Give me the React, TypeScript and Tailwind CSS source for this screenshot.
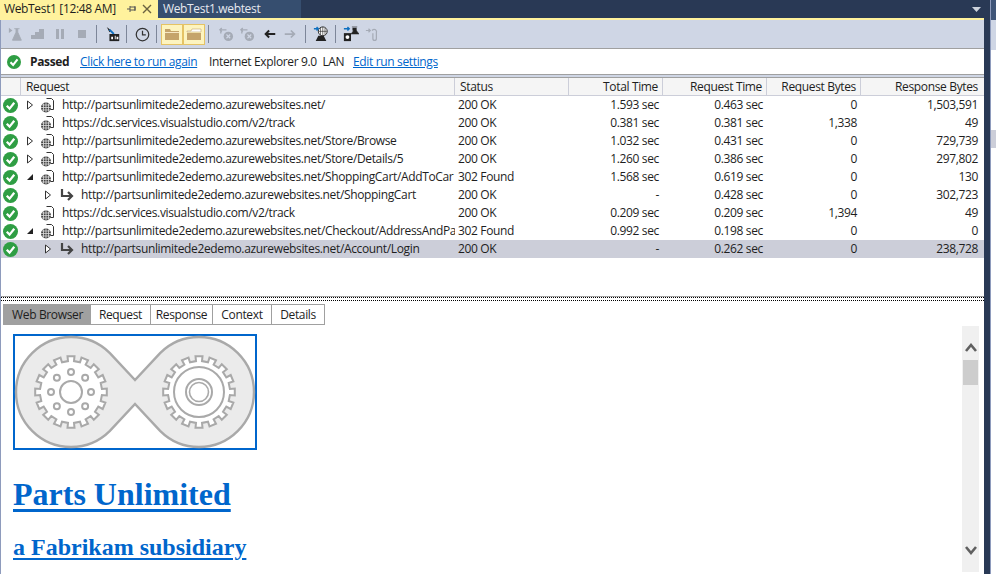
const rows = [
  { indent: 0, arrow: "open", icon: "page", url: "http://partsunlimitede2edemo.azurewebsites.net/", status: "200 OK", total: "1.593 sec", req: "0.463 sec", rb: "0", resp: "1,503,591" },
  { indent: 0, arrow: "none", icon: "page", url: "https://dc.services.visualstudio.com/v2/track", status: "200 OK", total: "0.381 sec", req: "0.381 sec", rb: "1,338", resp: "49" },
  { indent: 0, arrow: "open", icon: "page", url: "http://partsunlimitede2edemo.azurewebsites.net/Store/Browse", status: "200 OK", total: "1.032 sec", req: "0.431 sec", rb: "0", resp: "729,739" },
  { indent: 0, arrow: "open", icon: "page", url: "http://partsunlimitede2edemo.azurewebsites.net/Store/Details/5", status: "200 OK", total: "1.260 sec", req: "0.386 sec", rb: "0", resp: "297,802" },
  { indent: 0, arrow: "down", icon: "page", url: "http://partsunlimitede2edemo.azurewebsites.net/ShoppingCart/AddToCar", status: "302 Found", total: "1.568 sec", req: "0.619 sec", rb: "0", resp: "130" },
  { indent: 1, arrow: "open", icon: "redirect", url: "http://partsunlimitede2edemo.azurewebsites.net/ShoppingCart", status: "200 OK", total: "-", req: "0.428 sec", rb: "0", resp: "302,723" },
  { indent: 0, arrow: "none", icon: "page", url: "https://dc.services.visualstudio.com/v2/track", status: "200 OK", total: "0.209 sec", req: "0.209 sec", rb: "1,394", resp: "49" },
  { indent: 0, arrow: "down", icon: "page", url: "http://partsunlimitede2edemo.azurewebsites.net/Checkout/AddressAndPa", status: "302 Found", total: "0.992 sec", req: "0.198 sec", rb: "0", resp: "0" },
  { indent: 1, arrow: "open", icon: "redirect", url: "http://partsunlimitede2edemo.azurewebsites.net/Account/Login", status: "200 OK", total: "-", req: "0.262 sec", rb: "0", resp: "238,728", selected: true },
];

function PassIcon({ size = 16 }: { size?: number }) {
  return (
    <svg width={size} height={size} viewBox="0 0 16 16" className="shrink-0">
      <circle cx="8" cy="8" r="8" fill="#2f9e44" />
      <path d="M4 8.300 7 11.300 12 5" fill="none" stroke="#fff" strokeWidth="2.400" />
    </svg>
  );
}

function PageIcon() {
  return (
    <svg width="16" height="16" viewBox="0 0 16 16" className="shrink-0">
      <path d="M6.500 1.500h5l2 2v9h-3" fill="#fff" stroke="#333" />
      <circle cx="6" cy="10.500" r="5" fill="#444" />
      <path d="M1 10.500h10M6 5.500v10M3.500 6.500v8M8.500 6.500v8M2 8h8M2 13h8" stroke="#ddd" strokeWidth="0.800" />
    </svg>
  );
}

function RedirectIcon() {
  return (
    <svg width="16" height="14" viewBox="0 0 16 14" className="shrink-0">
      <path d="M3 1v7h9" fill="none" stroke="#444" strokeWidth="2.200" />
      <path d="M9 4l4 4-4 4" fill="none" stroke="#444" strokeWidth="2.200" />
    </svg>
  );
}

function Arrow({ kind }: { kind: string }) {
  if (kind === "open") {
    return (
      <svg width="8" height="10" viewBox="0 0 8 10">
        <path d="M1.500 1v8L6.500 5z" fill="#fff" stroke="#333" />
      </svg>
    );
  }
  if (kind === "down") {
    return (
      <svg width="8" height="10" viewBox="0 0 8 10">
        <path d="M7 2v6H1z" fill="#222" />
      </svg>
    );
  }
  return <span className="block w-2" />;
}

function Sep({ className }: { className: string }) {
  return <div className={`h-[18px] w-px bg-[#7d8699] ${className}`} />;
}

function Toolbar() {
  return (
    <div className="flex h-[28px] items-center bg-[#cfd6e5] pl-[7px]">
      <div className="flex w-[84px] items-center">
        <svg width="16" height="16" viewBox="0 0 18 16">
          <path d="M1 1l4 3-4 3z" fill="#a5abb6" />
          <path d="M7 2h6M9 2v4l-4 9h10L11 6V2" fill="#a5abb6" stroke="#a5abb6" />
        </svg>
        <svg width="16" height="16" viewBox="0 0 16 16" className="ml-[6px]">
          <path d="M1 13V9h4V6h4V3h5v10z" fill="#a5abb6" />
        </svg>
        <svg width="14" height="14" viewBox="0 0 14 14" className="ml-[7px]">
          <path d="M3 2h3v10H3zM8 2h3v10H8z" fill="#a5abb6" />
        </svg>
        <svg width="14" height="14" viewBox="0 0 14 14" className="ml-[8px]">
          <path d="M3 3h8v8H3z" fill="#a5abb6" />
        </svg>
      </div>
      <Sep className="ml-[4px]" />
      <svg width="16" height="16" viewBox="0 0 18 18" className="ml-[8px]">
        <path d="M2 1l5 4-2 2z" fill="#222" />
        <path d="M5 4l5 5" stroke="#0e70c0" strokeWidth="2" />
        <path d="M5 9h11v8H5z" fill="#222" />
        <path d="M7 12h2v3H7zM11 11h1v4h-1zM13 12h2v3h-2z" fill="#fff" />
      </svg>
      <Sep className="ml-[5px]" />
      <svg width="15" height="15" viewBox="0 0 18 18" className="ml-[8px]">
        <circle cx="9" cy="9" r="7.500" fill="none" stroke="#333" strokeWidth="1.500" />
        <path d="M9 4.500V9.500H13" fill="none" stroke="#333" strokeWidth="1.500" />
      </svg>
      <Sep className="ml-[6px]" />
      <div className="ml-[4px] flex h-[21px] w-[22px] items-center justify-center border border-[#e5c365] bg-[#fdf4bf]">
        <svg width="16" height="14" viewBox="0 0 16 14">
          <path d="M1 2h5l1 2h8v9H1z" fill="#c5a46b" />
          <path d="M1 5h14v1H1z" fill="#f5e6c4" />
        </svg>
      </div>
      <div className="flex h-[21px] w-[22px] items-center justify-center border border-[#e5c365] bg-[#fdf4bf]">
        <svg width="16" height="14" viewBox="0 0 16 14">
          <path d="M1 4h4l1-2h9v3H1z" fill="#fff" stroke="#c5a46b" strokeWidth="0.600" />
          <path d="M1 6h14v7H1z" fill="#c5a46b" />
        </svg>
      </div>
      <Sep className="ml-[3px]" />
      {[9, 5].map((m) => (
        <svg key={m} width="16" height="15" viewBox="0 0 17 16" className={m === 9 ? "ml-[9px]" : "ml-[5px]"}>
          <path d="M2 3h7M4 1 2 3l2 2M3 4v3" fill="none" stroke="#a5abb6" strokeWidth="1.400" />
          <circle cx="11" cy="10" r="5" fill="#a5abb6" />
          <path d="M9 8l4 4M13 8l-4 4" stroke="#cfd6e5" strokeWidth="1.200" />
        </svg>
      ))}
      <svg width="14" height="12" viewBox="0 0 16 12" className="ml-[8px]">
        <path d="M14 6H3M7 2 3 6l4 4" fill="none" stroke="#222" strokeWidth="2.200" />
      </svg>
      <svg width="14" height="12" viewBox="0 0 16 12" className="ml-[6px]">
        <path d="M2 6h11M9 2l4 4-4 4" fill="none" stroke="#a5abb6" strokeWidth="2" />
      </svg>
      <Sep className="ml-[8px]" />
      <svg width="16" height="16" viewBox="0 0 18 18" className="ml-[7px]">
        <circle cx="11" cy="6" r="5" fill="#fff" stroke="#222" />
        <path d="M6 6h10M11 1v10M8.500 2v8M13.500 2v8" stroke="#222" strokeWidth="0.700" />
        <path d="M1 3h5M4 1l2 2-2 2" fill="none" stroke="#0e70c0" strokeWidth="1.600" />
        <path d="M3 17l3-6h6l3 6z" fill="#222" />
      </svg>
      <Sep className="ml-[6px]" />
      <svg width="16" height="16" viewBox="0 0 18 18" className="ml-[7px]">
        <path d="M1 3h6M5 1l2 2-2 2" fill="none" stroke="#0e70c0" strokeWidth="1.600" />
        <path d="M1 8h8v9H1z" fill="#222" />
        <circle cx="5" cy="12.500" r="2.200" fill="#fff" />
        <path d="M10 1h6M11 2v3h4V2M9 9l3-4h3l3 4z" fill="#222" stroke="#222" strokeWidth="0.600" />
      </svg>
      <svg width="14" height="16" viewBox="0 0 16 18" className="ml-[6px]">
        <path d="M1 5h5M4 3l2 2-2 2" fill="none" stroke="#a5abb6" strokeWidth="1.400" />
        <path d="M8 5c3-3 6 0 5 3v6c0 3-4 3-4 0V8" fill="none" stroke="#a5abb6" strokeWidth="1.400" />
      </svg>
    </div>
  );
}

// outline of a cog wheel around (cx, cy)
function gearPoints(cx: number, cy: number, outer: number, inner: number) {
  const n = 16;
  const pts: string[] = [];
  const step = (Math.PI * 2) / n;
  for (let i = 0; i < n; i++) {
    const a = i * step;
    const add = (r: number, t: number) =>
      pts.push(`${(cx + r * Math.cos(a + t * step)).toFixed(1)},${(cy + r * Math.sin(a + t * step)).toFixed(1)}`);
    add(inner, -0.25);
    add(outer, -0.25);
    add(outer, 0.25);
    add(inner, 0.25);
  }
  return pts.join(" ");
}

function Gear({ cx, variant }: { cx: number; variant: "dots" | "rings" }) {
  const dots = Array.from({ length: 8 }, (_, i) => (i * Math.PI) / 4);
  return (
    <g fill="none" stroke="#a9a9a9" strokeWidth="2">
      <polygon points={gearPoints(cx, 58, 36, 31)} fill="#fff" />
      {variant === "dots" ? (
        <>
          <circle cx={cx} cy="58" r="11" />
          {dots.map((a) => (
            <circle key={a} cx={cx + 20 * Math.cos(a)} cy={58 + 20 * Math.sin(a)} r="3" />
          ))}
        </>
      ) : (
        <>
          <circle cx={cx} cy="58" r="25" />
          <circle cx={cx} cy="58" r="13" />
          <circle cx={cx} cy="58" r="9.500" strokeWidth="1.600" />
        </>
      )}
    </g>
  );
}

function Logo() {
  return (
    <svg width="244" height="116" viewBox="0 0 244 116" className="block">
      <rect x="1" y="1" width="242" height="114" fill="#fff" stroke="#0066cc" strokeWidth="2" />
      <path
        d="M122 46 96.900 19.100A55 55 0 1 0 96.900 96.900L122 70 147.100 96.900A55 55 0 1 0 147.100 19.100Z"
        fill="#ebebeb"
        stroke="#a9a9a9"
        strokeWidth="2.400"
      />
      <Gear cx={58} variant="dots" />
      <Gear cx={186} variant="rings" />
    </svg>
  );
}

export default function App() {
  return (
    <div className="flex h-[574px] w-[996px] overflow-hidden bg-[#293955] font-['Open_Sans',sans-serif] text-[12px] tracking-[-0.35px] text-[#1e1e1e]">
      <div className="flex w-[984px] flex-col">
        <div className="flex h-[18px] items-stretch bg-[#293955] text-[12px] leading-[18px]">
          <div className="flex w-[158px] items-center bg-[#fff29d] pl-[4px] text-[#1e1e1e]">
            <span className="w-[121px]">WebTest1 [12:48 AM]</span>
            <svg width="10" height="10" viewBox="0 0 10 10" className="ml-[2px]">
              <path d="M0 5h3M3 2v6M3 3h5v3H3M8 2v5" fill="none" stroke="#555" />
            </svg>
            <svg width="10" height="10" viewBox="0 0 10 10" className="ml-[5px]">
              <path d="M1 1l8 8M9 1l-8 8" stroke="#6b6240" strokeWidth="1.400" />
            </svg>
          </div>
          <div className="flex w-[143px] items-center bg-[#364e6f] pl-[5px] text-[#e6e9ef]">WebTest1.webtest</div>
          <div className="flex flex-1 items-start justify-end pr-[2px] pt-[7px]">
            <svg width="10" height="5" viewBox="0 0 10 5">
              <path d="M0 0h9L4.500 5z" fill="#ced4dd" />
            </svg>
          </div>
        </div>
        <div className="h-[2px] bg-[#fff29d]" />
        <div className="flex flex-1 flex-col border-l border-[#8e9bbc]">
          <Toolbar />
          <div className="flex h-[27px] items-center whitespace-nowrap border-y border-[#a0a0a0] bg-white pl-[6px]">
            <PassIcon size={14} />
            <span className="ml-[9px] w-[38px] font-bold">Passed</span>
            <span className="ml-[12px] w-[129px] text-[#0066cc] underline">Click here to run again</span>
            <span className="w-[144px]">Internet Explorer 9.0&nbsp; LAN</span>
            <span className="text-[#0066cc] underline">Edit run settings</span>
          </div>
          <div className="h-[2px] bg-[#cfd6e5]" />
          <div className="flex h-[220px] flex-col border-b border-[#a0a0a0] bg-white">
            <div className="flex h-[19px] items-center border-y border-[#a0a0a0] border-b-[#ccced9] bg-[#f5f5f5] leading-[17px]">
              <div className="h-full w-[20px] border-r border-[#ccced9]" />
              <div className="h-full w-[434px] border-r border-[#ccced9] pl-[5px]">Request</div>
              <div className="h-full w-[114px] border-r border-[#ccced9] pl-[5px]">Status</div>
              <div className="h-full w-[94px] border-r border-[#ccced9] pr-[4px] text-right">Total Time</div>
              <div className="h-full w-[104px] border-r border-[#ccced9] pr-[4px] text-right">Request Time</div>
              <div className="h-full w-[94px] border-r border-[#ccced9] pr-[4px] text-right">Request Bytes</div>
              <div className="h-full w-[122px] pr-[5px] text-right">Response Bytes</div>
            </div>
            {rows.map((r, i) => (
              <div key={i} className={`flex h-[18px] items-center leading-[18px] ${r.selected ? "bg-[#ccced9]" : ""}`}>
                <div className="flex w-[20px] justify-center pr-[2px]">
                  <PassIcon size={15} />
                </div>
                <div className={`flex w-[434px] items-center overflow-hidden whitespace-nowrap ${r.indent ? "pl-[21px]" : "pl-[3px]"}`}>
                  <span className="flex w-[12px] shrink-0 justify-center">
                    <Arrow kind={r.arrow} />
                  </span>
                  <span className={`flex shrink-0 justify-center ${r.indent ? "ml-[4px] w-[18px]" : "ml-[2px] w-[20px]"}`}>
                    {r.icon === "page" ? <PageIcon /> : <RedirectIcon />}
                  </span>
                  <span className={r.indent ? "ml-[5px]" : "ml-[4px]"}>{r.url}</span>
                </div>
                <div className="w-[114px] pl-[3px]">{r.status}</div>
                <div className="w-[94px] pr-[4px] text-right">{r.total}</div>
                <div className="w-[104px] pr-[4px] text-right">{r.req}</div>
                <div className="w-[94px] pr-[4px] text-right">{r.rb}</div>
                <div className="w-[122px] pr-[5px] text-right">{r.resp}</div>
              </div>
            ))}
          </div>
          <div className="flex flex-1 flex-col bg-white">
            <div className="h-[4px] border-y border-dotted border-black" />
            <div className="ml-[2px] mt-[3px] flex h-[21px] w-[322px] border border-[#a0a0a0] leading-[19px]">
              <div className="w-[87px] bg-[#a0a0a0] text-center">Web Browser</div>
              <div className="w-[60px] border-r border-[#a0a0a0] text-center">Request</div>
              <div className="w-[62px] border-r border-[#a0a0a0] text-center">Response</div>
              <div className="w-[59px] border-r border-[#a0a0a0] text-center">Context</div>
              <div className="flex-1 text-center">Details</div>
            </div>
            <div className="flex flex-1 pt-[1px]">
              <div className="w-[961px] pl-[12px] pt-[8px] font-['Liberation_Serif',serif] tracking-normal text-[#0066cc]">
                <Logo />
                <div className="mt-[26px] text-[32px] font-bold leading-[37px] underline decoration-[3px] underline-offset-[4px]">Parts Unlimited</div>
                <div className="mt-[20px] text-[24px] font-bold leading-[28px] underline decoration-2 underline-offset-[3px]">a Fabrikam subsidiary</div>
              </div>
              <div className="flex h-[246px] w-[17px] flex-col items-center bg-[#f0f0f0] pt-[17px]">
                <svg width="12" height="9" viewBox="0 0 12 9">
                  <path d="M1 8l5-6 5 6" fill="none" stroke="#606060" strokeWidth="2.600" />
                </svg>
                <div className="mt-[8px] h-[25px] w-[15px] bg-[#cdcdcd]" />
                <div className="flex-1" />
                <svg width="12" height="9" viewBox="0 0 12 9" className="mb-[17px]">
                  <path d="M1 1l5 6 5-6" fill="none" stroke="#606060" strokeWidth="2.600" />
                </svg>
              </div>
            </div>
          </div>
        </div>
      </div>
      <div className="ml-[6px] flex w-[6px] flex-col border-l border-[#8e9bbc] bg-white">
        <div className="h-[20px] bg-[#3f5578]" />
        <div className="h-[30px] bg-[#cfd6e5]" />
        <div className="h-[80px] bg-white" />
        <div className="h-[18px] bg-[#ccced9]" />
      </div>
    </div>
  );
}
